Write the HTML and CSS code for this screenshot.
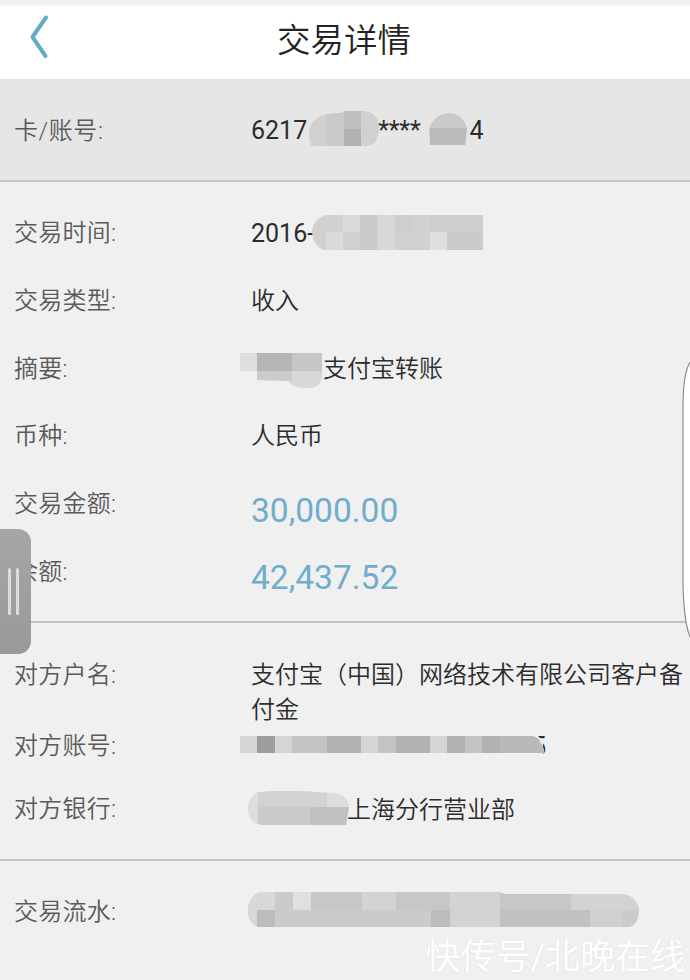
FILE: index.html
```html
<!DOCTYPE html>
<html lang="zh-CN">
<head>
<meta charset="utf-8">
<title>交易详情</title>
<link rel="stylesheet" href="styles.css">
</head>
<body>
<div class="screen">
  <header class="header">
    <svg class="back" width="24" height="46" viewBox="0 0 24 46"><path d="M20 4.500 6.500 24 19.500 43" fill="none" stroke="#62acc8" stroke-width="4" stroke-linecap="round" stroke-linejoin="round"/></svg>
    <h1 class="title">交易详情</h1>
  </header>

  <section class="group card">
    <div class="row">
      <div class="label">卡/账号:</div>
      <div class="value"><span>6217</span>
        <svg class="mask mask-card" width="71" height="36" viewBox="0 0 71 36"><clipPath id="c1"><path d="M2 35Q-4 17 8 7 14 2 32 2L36 0H55Q71 2 70 18T58 35H2Z"/></clipPath><g clip-path="url(#c1)"><path fill="#d0d0d0" d="M0 0h71v36H0z"/><path fill="#c9c9c9" d="M18 0h17v36H18z"/><path fill="#bebebe" d="M35 0h17v18H35z"/><path fill="#b1b1b1" d="M35 18h17v18H35z"/></g></svg>
        <span class="stars">****</span>
        <span class="tail">4</span>
        <svg class="mask mask-tail" width="40" height="34" viewBox="0 0 40 34"><path fill="#cacaca" d="M0 15Q7 0 21 0 33 1 38 14L36 32H1z"/><path fill="#bababa" d="M1 15h37l-2 17H1z"/></svg>
      </div>
    </div>
  </section>

  <section class="group main">
    <div class="row">
      <div class="label">交易时间:</div>
      <div class="value"><span>2016-</span>
        <svg class="mask mask-time" width="171" height="35" viewBox="0 0 171 35"><clipPath id="c2"><path d="M15 0H171V35H11Q0 29 0 17 1 3 15 0Z"/></clipPath><g clip-path="url(#c2)"><path fill="#d1d1d1" d="M0 0h171v35H0z"/><path fill="#dadada" d="M31 0h17v17H31zM14 17h17v18H14z"/><path fill="#cbcbcb" d="M48 0h17v35H48zM133 17h38v18h-38z"/><path fill="#d8d8d8" d="M66 0h17v35H66z"/><path fill="#cecece" d="M83 0h17v17H83zM118 0h53v17h-53z"/><path fill="#dfdfdf" d="M118 17h17v18h-17z"/></g></svg>
      </div>
    </div>
    <div class="row"><div class="label">交易类型:</div><div class="value">收入</div></div>
    <div class="row">
      <div class="label">摘要:</div>
      <div class="value">
        <svg class="mask mask-memo" width="84" height="36" viewBox="0 0 84 36"><clipPath id="c3"><path d="M0 0H82V24Q80 36 67 35 54 36 48 28L17 27V18H0Z"/></clipPath><g clip-path="url(#c3)"><path fill="#d8d8d8" d="M0 0h84v36H0z"/><path fill="#dedede" d="M0 0h17v18H0z"/><path fill="#b6b6b6" d="M17 0h35v18H17z"/><path fill="#c6c6c6" d="M52 0h32v18H52z"/><path fill="#cbcbcb" d="M17 18h35v10H17z"/></g></svg>
        <span>支付宝转账</span>
      </div>
    </div>
    <div class="row"><div class="label">币种:</div><div class="value">人民币</div></div>
    <div class="row"><div class="label">交易金额:</div><div class="value amount">30,000.00</div></div>
    <div class="row"><div class="label">余额:</div><div class="value amount">42,437.52</div></div>
  </section>

  <section class="group party">
    <div class="row name"><div class="label">对方户名:</div><div class="value">支付宝（中国）网络技术有限公司客户备付金</div></div>
    <div class="row account">
      <div class="label">对方账号:</div>
      <div class="value">
        <span class="digit">5</span>
        <svg class="mask mask-account" width="308" height="23" viewBox="0 0 308 23"><path fill="#f0f0f0" d="M282 3h16q5 4 5 10v10H282z"/><path fill="#c4c4c4" d="M0 3h292q7 1 9 8l3 5v4H0z"/><path fill="#d5d5d5" d="M0 3h17v17H0zM35 3h17v17H35zM121 3h17v17h-17zM190 3h17v17h-17z"/><path fill="#9e9e9e" d="M17 3h18v17H17z"/><path fill="#b2b2b2" d="M87 3h34v17H87zM156 3h34v17h-34zM207 3h18v17h-18zM242 3h18v17h-18z"/><path fill="#b9b9b9" d="M260 3h32q7 1 9 8l3 5v4h-44z"/></svg>
      </div>
    </div>
    <div class="row bank">
      <div class="label">对方银行:</div>
      <div class="value">
        <svg class="mask mask-bank" width="103" height="34" viewBox="0 0 103 34"><clipPath id="c4"><path d="M11 1Q28-1 55 0L83 2Q100 3 101 16L98 34H14Q0 32 0 17 1 5 11 1Z"/></clipPath><g clip-path="url(#c4)"><path fill="#d2d2d2" d="M0 0h103v34H0z"/><path fill="#dddddd" d="M0 0h10v34H0zM79 0h24v16H79z"/><path fill="#cbcbcb" d="M10 16h52v18H10z"/><path fill="#c1c1c1" d="M62 16h41v18H62z"/></g></svg>
        <span>上海分行营业部</span>
      </div>
    </div>
  </section>

  <section class="group serial">
    <div class="row">
      <div class="label">交易流水:</div>
      <div class="value">
        <svg class="mask mask-serial" width="392" height="36" viewBox="0 0 392 36"><clipPath id="c5"><path d="M12 0H251L258 2H375Q390 5 391 19 391 31 382 35H10Q0 32 0 18 1 4 12 0Z"/></clipPath><g clip-path="url(#c5)"><path fill="#cbcbcb" d="M0 0h392v36H0z"/><path fill="#d8d8d8" d="M0 0h9v36H0zM9 0h18v18H9z"/><path fill="#e0e0e0" d="M45 0h18v18H45z"/><path fill="#d3d3d3" d="M114 0h34v18h-34zM202 0h50v36h-50zM323 2h69v16h-69z"/><path fill="#bcbcbc" d="M9 18h18v18H9zM183 18h19v18h-19z"/><path fill="#c1c1c1" d="M252 18h90v18h-90z"/><path fill="#c7c7c7" d="M63 0h51v18H63zM148 0h54v18h-54zM252 2h71v16h-71z"/><path fill="#d0d0d0" d="M342 18h33v18h-33z"/></g></svg>
      </div>
    </div>
  </section>

  <div class="handle"><i></i><i></i></div>
  <svg class="edge" width="10" height="284" viewBox="0 0 10 284"><path d="M11 2Q3 12 3 48V226Q4 266 11 280Z" fill="#fff" stroke="#8c8c8c" stroke-width="1.200"/></svg>
  <div class="watermark">快传号/北晚在线</div>
</div>
</body>
</html>
```
FILE: styles.css
```css
* { box-sizing: border-box; }
body { margin: 0; background: #f0f0f0; }
.screen {
  position: relative;
  width: 690px;
  height: 980px;
  overflow: hidden;
  font: 350 24px/34px Roboto, "Noto Sans CJK SC", sans-serif;
  color: #2c2c2c;
}
.header {
  display: flex;
  align-items: center;
  justify-content: center;
  height: 80px;
  background: linear-gradient(#efefef 0, #f3f3f3 4px, #fff 8px);
  border-bottom: 1px solid #e2e2e2;
}
.title { margin: 2px 0 0 -2px; font-size: 33.5px; font-weight: 350; line-height: 48px; color: #222; }
.back { position: absolute; left: 26px; top: 13px; }

.group { border-bottom: 2px solid #c3c3c3; }
.row { display: grid; grid-template-columns: 251px 1fr; align-items: center; }
.label { padding: 1px 0 0 14px; color: #5a5a5a; letter-spacing: .25px; }
.value { position: relative; display: flex; align-items: center; padding-top: 1px; white-space: nowrap; }
.mask { display: block; flex: none; }

.card { height: 102px; background: #e6e6e6; }
.card .row { height: 100px; }
.card .label { letter-spacing: .6px; }
.card .value, .main .row:first-child .value { font-size: 25px; font-weight: 400; padding-top: 2px; }
.mask-card { margin: -4px 0 0 2px; }
.stars { margin-left: -2px; letter-spacing: -.2px; }
.tail { margin-left: 49px; }
.mask-tail { position: absolute; left: 178px; top: 1px; }

.main { height: 441px; padding-top: 17px; }
.main .row { height: 67.7px; }
.mask-time { margin: -3px 0 0 -2px; }
.mask-memo { margin: 5px -1px 0 -11px; }
.main .value.amount { font-size: 33.5px; font-weight: 400; color: #70adcc; padding-top: 14px; line-height: 40px; }

.party { height: 238px; padding-top: 33px; }
.name .value { white-space: normal; line-height: 35px; padding-top: 2px; }
.name { height: 70px; align-items: start; }
.name .label { padding-top: 2px; }
.account { height: 38px; }
.account .value { height: 34px; font-size: 25px; font-weight: 400; padding-top: 4px; }
.digit { margin-left: 281px; }
.mask-account { position: absolute; left: -11px; top: 5px; }
.bank { height: 89px; }
.bank .value { padding-top: 2px; }
.mask-bank { margin: -4px -5px 0 -3px; }
.bank span { margin-left: 1px; }

.serial { border: 0; }
.serial .row { height: 101px; }
.mask-serial { margin: -4px 0 0 -3px; }

.handle {
  position: absolute;
  left: 0;
  top: 529px;
  display: flex;
  justify-content: center;
  align-items: center;
  gap: 5px;
  width: 31px;
  height: 125px;
  padding-right: 4px;
  border-radius: 0 13px 13px 0;
  background: linear-gradient(#a6a6a6, #999);
}
.handle i { width: 3px; height: 47px; background: #dcdcdc; border-radius: 2px; }
.edge { position: absolute; right: 0; top: 359px; }
.watermark {
  position: absolute;
  right: 5px;
  bottom: -2px;
  font-size: 35px;
  font-weight: 400;
  line-height: 48px;
  color: #fff;
  white-space: nowrap;
  text-shadow: 0 0 2px #ddd;
}
```
